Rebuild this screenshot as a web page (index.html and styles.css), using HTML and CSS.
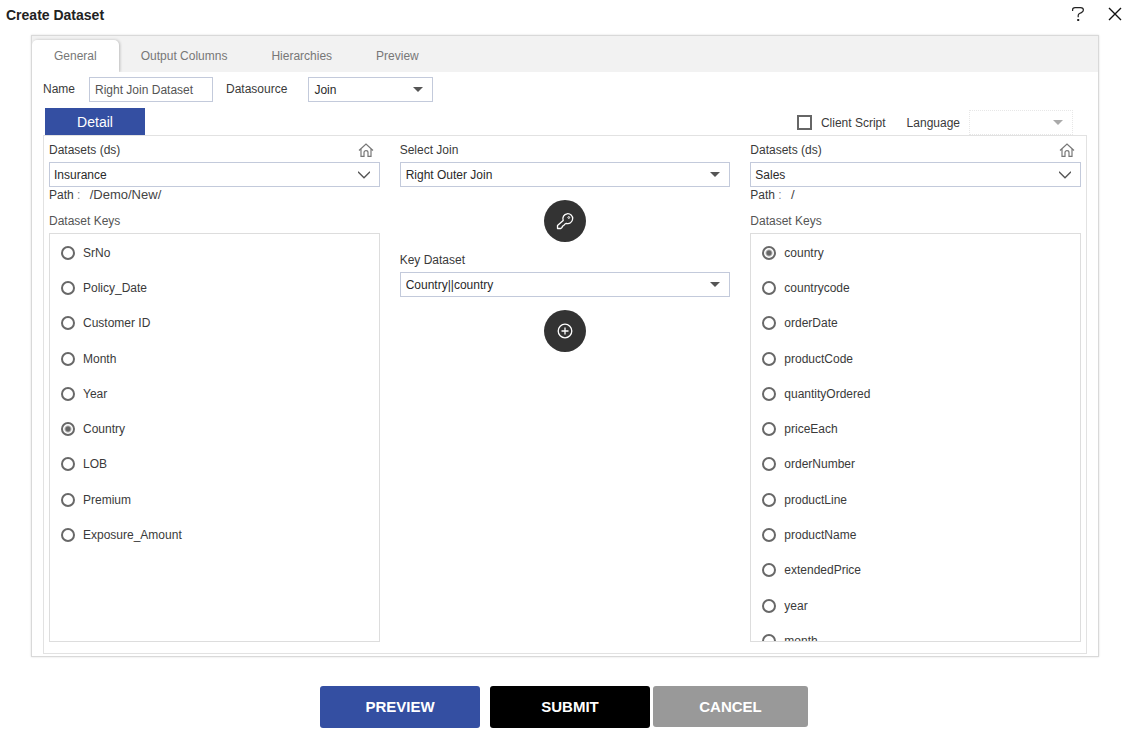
FILE: index.html
```html
<!DOCTYPE html>
<html lang="en">
<head>
<meta charset="utf-8">
<meta name="viewport" content="width=device-width, initial-scale=1">
<title>Create Dataset</title>
<link rel="stylesheet" href="styles.css">
</head>
<body>
<header class="titlebar">
  <h1 class="title">Create Dataset</h1>
  <div class="title-actions">
    <button class="icon-btn" type="button" aria-label="Help">
      <svg width="14" height="16" viewBox="0 0 14 16" fill="none" stroke="#222" stroke-width="1.200"><path d="M1.600 5V3.800C1.600 2.200 2.800 1.600 4 1.600h5.500c1.800 0 2.900.9 2.900 2.500 0 1.300-.7 1.900-2 2.500L8.500 7.500C7.500 8 7.200 8.600 7.200 9.600v1.600"/><path d="M7.200 13v2" stroke-width="2"/></svg>
    </button>
    <button class="icon-btn" type="button" aria-label="Close">
      <svg width="14" height="14" viewBox="0 0 14 14" fill="none" stroke="#111" stroke-width="1.400"><path d="M1 1l12 12M13 1L1 13"/></svg>
    </button>
  </div>
</header>

<main class="panel">
  <nav class="tabs">
    <button class="tab tab-active" type="button">General</button>
    <button class="tab" type="button">Output Columns</button>
    <button class="tab" type="button">Hierarchies</button>
    <button class="tab" type="button">Preview</button>
  </nav>

  <div class="meta">
    <label class="meta-label" for="name">Name</label>
    <input class="field name-field" id="name" type="text" value="Right Join Dataset">
    <label class="meta-label source-label" for="source">Datasource</label>
    <div class="picker source-picker">
      <select class="field" id="source"><option>Join</option></select>
      <svg class="arrow" width="10" height="5" viewBox="0 0 10 5"><path d="M0 0h10L5 5z" fill="#555"/></svg>
    </div>
  </div>

  <div class="subbar">
    <button class="detail-tab" type="button">Detail</button>
    <div class="script-options">
      <input class="check" id="client" type="checkbox">
      <label class="client-label" for="client">Client Script</label>
      <label class="language-label" for="language">Language</label>
      <div class="picker language-picker">
        <select class="field" id="language" disabled><option></option></select>
        <svg class="arrow" width="10" height="5" viewBox="0 0 10 5"><path d="M0 0h10L5 5z" fill="#aaa"/></svg>
      </div>
    </div>
  </div>

  <section class="detail">
    <div class="column">
      <div class="column-head">
        <label for="left-ds">Datasets (ds)</label>
        <svg width="16" height="14" viewBox="0 0 16 14" fill="none" stroke="#777" stroke-width="1.200"><path d="M1 7.500L8 1l7 6.500M3 6v7.300h3V9.500c0-2.500 4-2.500 4 0v3.800h3V6"/></svg>
      </div>
      <div class="picker">
        <select class="field combo" id="left-ds"><option>Insurance</option></select>
        <svg class="arrow" width="12" height="8" viewBox="0 0 12 8" fill="none" stroke="#555" stroke-width="1.300"><path d="M0 .8l6 6 6-6"/></svg>
      </div>
      <p class="path">Path <span class="colon">:</span> <span class="path-value">/Demo/New/</span></p>
      <h2 class="keys-title">Dataset Keys</h2>
      <div class="keys">
        <label class="key"><input class="radio" type="radio" name="left">SrNo</label>
        <label class="key"><input class="radio" type="radio" name="left">Policy_Date</label>
        <label class="key"><input class="radio" type="radio" name="left">Customer ID</label>
        <label class="key"><input class="radio" type="radio" name="left">Month</label>
        <label class="key"><input class="radio" type="radio" name="left">Year</label>
        <label class="key"><input class="radio" type="radio" name="left" checked>Country</label>
        <label class="key"><input class="radio" type="radio" name="left">LOB</label>
        <label class="key"><input class="radio" type="radio" name="left">Premium</label>
        <label class="key"><input class="radio" type="radio" name="left">Exposure_Amount</label>
      </div>
    </div>

    <div class="column">
      <div class="column-head"><label for="join">Select Join</label></div>
      <div class="picker">
        <select class="field" id="join"><option>Right Outer Join</option></select>
        <svg class="arrow" width="10" height="5" viewBox="0 0 10 5"><path d="M0 0h10L5 5z" fill="#555"/></svg>
      </div>
      <button class="round-btn" type="button" aria-label="Set key">
        <svg width="18" height="18" viewBox="0 0 18 18" fill="none" stroke="#fff" stroke-width="1.300" stroke-linejoin="round"><path d="M7.200 8.400A4.900 4.900 0 1 1 10.300 11.300L8.700 12.300 7.600 13.600 6.600 14 6 15.600 4.800 16.500H1.500V13.600z"/><circle cx="12.800" cy="5.500" r=".9" stroke-width="1"/></svg>
      </button>
      <div class="column-head"><label for="key-ds">Key Dataset</label></div>
      <div class="picker">
        <select class="field" id="key-ds"><option>Country||country</option></select>
        <svg class="arrow" width="10" height="5" viewBox="0 0 10 5"><path d="M0 0h10L5 5z" fill="#555"/></svg>
      </div>
      <button class="round-btn" type="button" aria-label="Add">
        <svg width="16" height="16" viewBox="0 0 16 16" fill="none" stroke="#fff" stroke-width="1.300"><circle cx="8" cy="8" r="6.800"/><path d="M8 4.500v7M4.500 8h7"/></svg>
      </button>
    </div>

    <div class="column">
      <div class="column-head">
        <label for="right-ds">Datasets (ds)</label>
        <svg width="16" height="14" viewBox="0 0 16 14" fill="none" stroke="#777" stroke-width="1.200"><path d="M1 7.500L8 1l7 6.500M3 6v7.300h3V9.500c0-2.500 4-2.500 4 0v3.800h3V6"/></svg>
      </div>
      <div class="picker">
        <select class="field combo" id="right-ds"><option>Sales</option></select>
        <svg class="arrow" width="12" height="8" viewBox="0 0 12 8" fill="none" stroke="#555" stroke-width="1.300"><path d="M0 .8l6 6 6-6"/></svg>
      </div>
      <p class="path">Path <span class="colon">:</span> <span class="path-value">/</span></p>
      <h2 class="keys-title">Dataset Keys</h2>
      <div class="keys">
        <label class="key"><input class="radio" type="radio" name="right" checked>country</label>
        <label class="key"><input class="radio" type="radio" name="right">countrycode</label>
        <label class="key"><input class="radio" type="radio" name="right">orderDate</label>
        <label class="key"><input class="radio" type="radio" name="right">productCode</label>
        <label class="key"><input class="radio" type="radio" name="right">quantityOrdered</label>
        <label class="key"><input class="radio" type="radio" name="right">priceEach</label>
        <label class="key"><input class="radio" type="radio" name="right">orderNumber</label>
        <label class="key"><input class="radio" type="radio" name="right">productLine</label>
        <label class="key"><input class="radio" type="radio" name="right">productName</label>
        <label class="key"><input class="radio" type="radio" name="right">extendedPrice</label>
        <label class="key"><input class="radio" type="radio" name="right">year</label>
        <label class="key"><input class="radio" type="radio" name="right">month</label>
      </div>
    </div>
  </section>
</main>

<footer class="actions">
  <button class="action preview" type="button">PREVIEW</button>
  <button class="action submit" type="button">SUBMIT</button>
  <button class="action cancel" type="button">CANCEL</button>
</footer>
</body>
</html>
```
FILE: styles.css
```css
* { box-sizing: border-box; }
body {
  margin: 0;
  height: 100vh;
  min-height: 560px;
  display: flex;
  flex-direction: column;
  background: #fff;
  color: #3a3a3a;
  font: 12px/16px "Liberation Sans", Arial, sans-serif;
}
button, input, select { font: inherit; color: inherit; margin: 0; }
button { border: 0; padding: 0; background: none; cursor: pointer; }
svg { display: block; }

.titlebar {
  display: flex;
  justify-content: space-between;
  align-items: center;
  height: 35px;
  padding: 0 6px 6px 6px;
}
.title { margin: 0; font-size: 14px; color: #222; }
.title-actions { display: flex; align-items: center; gap: 23px; padding-bottom: 2px; }
.icon-btn { display: flex; }

.panel {
  flex: 1;
  min-height: 0;
  display: flex;
  flex-direction: column;
  margin: 0 29px 0 31px;
  border: 1px solid #d9d9d9;
  box-shadow: 0 0 2px #ddd;
}
.tabs {
  display: flex;
  height: 36px;
  padding-top: 4px;
  background: #f2f2f2;
}
.tab { padding: 0 22px; color: #777; }
.tab-active {
  background: #fff;
  border-radius: 5px 5px 0 0;
  box-shadow: 1px 0 3px #bbb;
  clip-path: inset(-4px -4px 0 0);
}

.meta {
  display: flex;
  align-items: center;
  padding: 5px 11px 0;
}
.meta-label { padding-bottom: 2px; }
.field {
  width: 100%;
  height: 25px;
  padding: 0 5px;
  border: 1px solid #c3cadb;
  border-radius: 0;
  background: #fff;
  color: #2a2a2a;
  appearance: none;
  outline: 0;
}
.name-field { width: 124px; margin: 0 13px 0 14px; color: #555; }
.source-label { margin-right: 21px; }
.picker { position: relative; }
.source-picker { width: 125px; }
.arrow {
  position: absolute;
  right: 10px;
  top: 0;
  bottom: 0;
  margin: auto 0;
  pointer-events: none;
}
.combo { padding: 0 4px; }

.subbar {
  display: flex;
  justify-content: space-between;
  align-items: flex-end;
  padding: 6px 25px 0 13px;
}
.detail-tab {
  width: 100px;
  height: 27px;
  background: #344fa2;
  color: #fff;
  font-size: 14px;
}
.script-options { display: flex; align-items: center; }
.check {
  width: 15px;
  height: 15px;
  border: 2px solid #666;
  appearance: none;
}
.client-label { margin: 0 21px 0 9px; }
.language-label { margin-right: 9px; }
.language-picker { width: 104px; }
.language-picker .field { border: 1px dotted #ddd; }

.detail {
  flex: 1;
  min-height: 0;
  display: grid;
  grid-template-columns: repeat(3, minmax(0, 1fr));
  grid-template-rows: minmax(0, 1fr);
  gap: 20px;
  margin: 0 11px 2px;
  padding: 5px 5px 11px;
  border: 1px solid #e2e2e2;
}
.column { display: flex; flex-direction: column; min-height: 0; }
.column-head {
  display: flex;
  justify-content: space-between;
  align-items: center;
  height: 18px;
  margin-bottom: 3px;
  padding-right: 6px;
}
.path { margin: 0 0 1px; }
.colon { color: #888; }
.path-value { margin-left: 6px; font-size: 13px; color: #444; }
.keys-title {
  margin: 9px 0 4px;
  font-size: 12px;
  font-weight: 400;
  color: #555;
}
.keys {
  flex: 1;
  min-height: 0;
  display: grid;
  grid-auto-rows: calc(100% / 11.5);
  padding: 1px 11px 0;
  border: 1px solid #ddd;
  overflow-y: auto;
  scrollbar-width: none;
}
.key { display: flex; align-items: center; gap: 8px; }
.radio {
  width: 14px;
  height: 14px;
  border: 2px solid #686868;
  border-radius: 50%;
  appearance: none;
}
.radio:checked { background: radial-gradient(circle, #666 2px, #fff 4px); }
.round-btn {
  display: flex;
  align-items: center;
  justify-content: center;
  align-self: center;
  width: 42px;
  height: 42px;
  margin: 13px 0 9px;
  border-radius: 50%;
  background: #333;
}

.actions {
  display: flex;
  justify-content: center;
  padding: 29px 0 13px;
}
.action {
  width: 160px;
  height: 42px;
  border-radius: 3px;
  color: #fff;
  font-size: 15px;
  font-weight: 700;
}
.preview { background: #344fa2; margin-right: 10px; }
.submit { background: #000; margin-right: 3px; }
.cancel { width: 155px; height: 41px; background: #999; }
```
